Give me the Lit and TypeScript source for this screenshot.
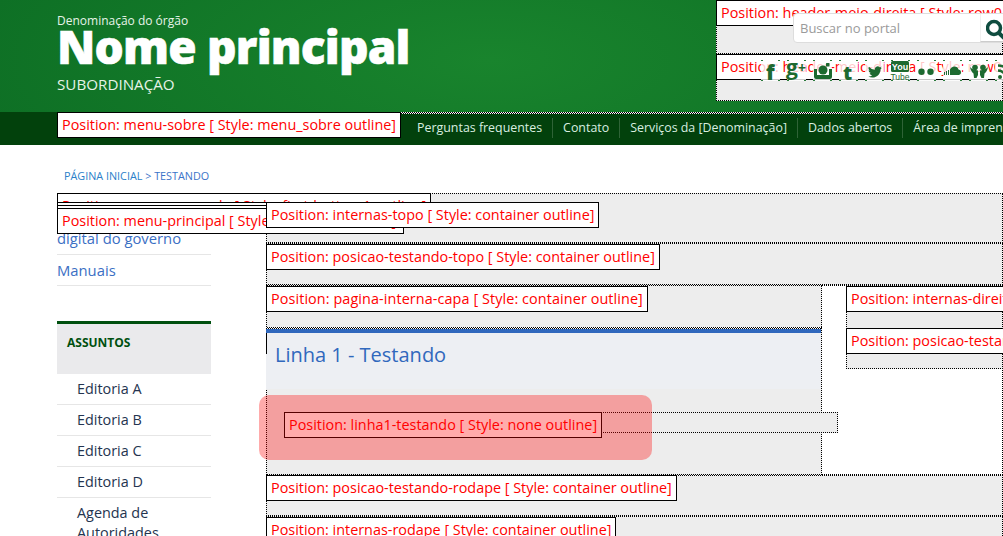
import { LitElement, css, html, svg } from 'lit';
import { customElement } from 'lit/decorators.js';

const NAV_ITEMS = ['Perguntas frequentes', 'Contato', 'Serviços da [Denominação]', 'Dados abertos', 'Área de imprensa'];
const ASSUNTOS = ['Editoria A', 'Editoria B', 'Editoria C', 'Editoria D', 'Agenda de Autoridades'];

const txt = (x: number, y: number, size: number, s: string, weight = 800) =>
  svg`<text x=${x} y=${y} font-size=${size} font-family="Open Sans" font-weight=${weight} fill="currentColor">${s}</text>`;

// sprite of social icons, drawn on a 19x21 tile
const SOCIAL = [
  txt(5, 20, 21, 'f'),
  svg`${txt(-1, 15, 21, 'g', 700)}${txt(11, 13, 14, '+', 700)}`,
  svg`<path d="M1 9h3v6h12V9h3v8a2 2 0 0 1-2 2H3a2 2 0 0 1-2-2z"/>
    <circle cx="10" cy="10" r="4.500"/>
    <rect x="13" y="3" width="3.500" height="3.500" rx="0.500"/>`,
  txt(4, 20, 20, 't'),
  svg`<path transform="translate(3 5) scale(0.58)" d="M23.95 4.57a10 10 0 0 1-2.82.78 4.96 4.96 0 0 0 2.16-2.72 10 10 0 0 1-3.12 1.18 4.92 4.92 0 0 0-8.38 4.48A13.94 13.94 0 0 1 1.64 3.16a4.92 4.92 0 0 0 1.52 6.57 4.9 4.9 0 0 1-2.23-.62v.06a4.92 4.92 0 0 0 3.95 4.83 5 5 0 0 1-2.21.08 4.94 4.94 0 0 0 4.6 3.42A9.87 9.87 0 0 1 0 19.54a14 14 0 0 0 7.56 2.21c9.05 0 14-7.5 14-13.98 0-.21 0-.42-.02-.63a10 10 0 0 0 2.41-2.57z"/>`,
  svg`<rect x="0" y="1" width="18" height="11" rx="1.500"/>
    <text x="9" y="10" text-anchor="middle" font-size="9" font-weight="700" font-family="Liberation Sans" fill="#fff">You</text>
    <text x="9" y="20" text-anchor="middle" font-size="8.500" font-family="Liberation Sans" fill="currentColor">Tube</text>`,
  svg`<circle cx="4.500" cy="11.700" r="3.200"/><circle cx="13.500" cy="11.700" r="3.200"/>`,
  svg`<path d="M1 15v-3h1v3zM3 15v-4h1v4zM5 15v-5h1v5zM7 15V9.500a5 5 0 0 1 7-2.300 4 4 0 0 1 1.500 2.300A2.800 2.800 0 0 1 16 15z"/>`,
  svg`<circle cx="6" cy="7.500" r="2.800"/><circle cx="14" cy="7.500" r="2.800"/>
    <path d="M1 7c2 2.500 5 3 8 3.500V15l-1.500 3H5l-.5-4.500C3 12.500 1.500 10 1 7zM19 7c-2 2.500-5 3-8 3.500V15l1.500 3H15l.5-4.500C17 12.500 18.500 10 19 7z"/>`,
  svg`<circle cx="5" cy="17" r="2"/>
    <path d="M3 10.500a8 8 0 0 1 8 8M3 5.500a13 13 0 0 1 13 13" fill="none" stroke="currentColor" stroke-width="2.500"/>`,
];

@customElement('app-root')
export class AppRoot extends LitElement {
  static styles = css`
    :host {
      display: block;
      width: 100%;
      height: 536px;
      overflow: hidden;
      background: #fff;
      font-family: 'Open Sans', 'Liberation Sans', sans-serif;
    }

    /* template preview boxes */
    .label {
      position: relative;
      z-index: 2;
      display: block;
      box-sizing: border-box;
      width: max-content;
      height: 26px;
      padding: 2px 4px;
      border: 1px solid #000;
      background: #fff;
      color: #f00;
      font-size: 14.4px;
      line-height: 20px;
      white-space: nowrap;
    }

    .label.spread {
      letter-spacing: 0.09px;
    }

    .mod {
      box-sizing: border-box;
      background: #ededed;
      outline: 1px dotted #000;
      outline-offset: -1px;
    }

    .header {
      display: flex;
      justify-content: space-between;
      height: 112px;
      padding-left: 57px;
      background: radial-gradient(ellipse 520px 190px at 490px 60px, #19842d 0%, #0e7025 100%);
    }

    .brand {
      display: flex;
      flex-direction: column;
      color: #fff;
    }

    .organ {
      margin-top: 11px;
      font-size: 12px;
      line-height: 20px;
      color: #e6f3e8;
    }

    .title {
      margin-top: -9px;
      font-size: 46px;
      font-weight: 800;
      line-height: 48px;
      letter-spacing: -0.8px;
      -webkit-text-stroke: 0.6px #fff;
      white-space: nowrap;
    }

    .sub {
      margin-top: 4px;
      font-size: 15.2px;
      line-height: 20px;
      color: #e6f3e8;
    }

    .tools {
      position: relative;
      width: 287px;
      height: 101px;
      overflow: hidden;
    }

    .tools .first {
      height: 54px;
    }

    .tools .second {
      height: 47px;
    }

    .search {
      position: absolute;
      z-index: 3;
      top: 13px;
      left: 77px;
      display: flex;
      box-sizing: border-box;
      width: 230px;
      height: 30px;
      border: 1px solid #ddd;
      border-radius: 4px;
      background: #fff;
    }

    .search span {
      flex: 1;
      padding-left: 6px;
      color: #9a9a9a;
      font-size: 13px;
      line-height: 28px;
    }

    .search button {
      width: 42px;
      padding: 0;
      border: 0;
      border-left: 1px solid #f0f0f0;
      border-bottom: 1px solid #ccc;
      background: #fff;
      text-align: left;
    }

    .search svg {
      display: block;
      margin-left: 5px;
    }

    .social {
      position: absolute;
      z-index: 3;
      top: 60px;
      left: 45px;
      display: flex;
      gap: 7px;
      color: #1d6a30;
    }

    .tile {
      width: 19px;
      height: 21px;
      background:
        linear-gradient(#2b7a3c, #2b7a3c) left top / 2px 1px no-repeat,
        linear-gradient(#2b7a3c, #2b7a3c) right top / 2px 1px no-repeat,
        linear-gradient(#2b7a3c, #2b7a3c) left bottom / 2px 1px no-repeat,
        linear-gradient(#2b7a3c, #2b7a3c) right bottom / 2px 1px no-repeat,
        rgba(255, 255, 255, 0.78);
    }

    .tile svg {
      display: block;
      overflow: visible;
      fill: currentColor;
    }

    .nav {
      display: flex;
      height: 33px;
      padding-left: 57px;
      background: #02410c;
    }

    .nav-line {
      display: flex;
      flex: 1;
      padding-left: 6px;
      background: conic-gradient(#000 25%, #fff 0 50%, #000 0 75%, #fff 0) left top / 2px 2px repeat-x;
    }

    .nav a {
      height: 20px;
      margin-top: 6px;
      padding: 0 10px;
      border-right: 1px solid rgba(255, 255, 255, 0.18);
      color: #d9efe0;
      font-size: 12.4px;
      line-height: 20px;
      white-space: nowrap;
    }

    .nav a:last-child {
      border-right: 0;
    }

    .crumb {
      padding: 21px 0 7px 64px;
      color: #3b73c8;
      font-size: 10.8px;
      line-height: 20px;
    }

    .crumb b {
      color: #2b7fc9;
      font-weight: 400;
    }

    .main {
      display: flex;
      padding-left: 57px;
    }

    .side {
      flex: none;
      width: 154px;
      margin-right: 55px;
    }

    .side .label {
      z-index: 1;
    }

    .side .label + .label {
      margin-top: -23px;
    }

    .side .label.l2 {
      margin-top: -17px;
    }

    .side .label.front {
      padding-right: 7px;
    }

    .links {
      margin: -31px 0 0;
      padding: 0;
      list-style: none;
      font-size: 14.8px;
      line-height: 20px;
      color: #3b6fc4;
    }

    .links li {
      padding: 5px 0;
      border-bottom: 1px solid #e6e6e6;
    }

    .links li:first-child {
      padding-bottom: 6px;
    }

    .topics {
      margin-top: 35px;
    }

    .topics h2 {
      box-sizing: border-box;
      height: 53px;
      margin: 0;
      padding: 9px 10px;
      border-top: 3px solid #00500f;
      background: #eaeaec;
      color: #00500f;
      font-size: 12px;
      font-weight: 700;
      line-height: 20px;
    }

    .topics ul {
      margin: 0;
      padding: 0;
      list-style: none;
    }

    .topics li {
      padding: 5px 20px;
      border-bottom: 1px solid #e6e6e6;
      color: #24344f;
      font-size: 14.4px;
      line-height: 20px;
    }

    .content {
      flex: 1;
      min-width: 0;
    }

    .m-topo {
      height: 50px;
      padding-top: 9px;
    }

    .m-testando {
      height: 42px;
      padding-top: 1px;
    }

    .cols {
      display: flex;
      gap: 24px;
      height: 190px;
      outline: 1px dotted #000;
      outline-offset: -1px;
    }

    .capa {
      position: relative;
      flex: none;
      width: 556px;
      padding-top: 1px;
    }

    .capa-head {
      height: 43px;
      background: conic-gradient(#000 25%, #fff 0 50%, #000 0 75%, #fff 0) left bottom / 2px 2px repeat-x;
    }

    .line {
      position: relative;
      z-index: 1;
      box-sizing: border-box;
      height: 60px;
      margin: 0 1px 0 0;
      padding: 7px 9px 0;
      border-top: 4px solid #3068bd;
      background: linear-gradient(#000, #000) left top / 1px 21px no-repeat, #edeff3;
      color: #3068bd;
      font-size: 20px;
      font-weight: 400;
      line-height: 30px;
    }

    .slot {
      position: relative;
      z-index: 2;
      width: 554px;
      height: 21px;
      margin: 23px 0 0 18px;
      background: #ededed;
      outline: 1px dotted #000;
      outline-offset: -1px;
    }

    .highlight {
      position: absolute;
      z-index: 4;
      top: -17px;
      left: -25px;
      width: 393px;
      height: 65px;
      border-radius: 10px;
      background: rgba(255, 0, 0, 0.33);
    }

    .aside {
      flex: 1;
      min-width: 0;
      overflow: hidden;
      align-self: flex-start;
      height: 84px;
      padding-top: 1px;
    }

    .aside .gap {
      height: 16px;
    }

    .m-rodape {
      height: 41px;
    }

    .m-last {
      height: 60px;
      padding-top: 1px;
    }
  `;

  private label(text: string, cls = '') {
    return html`<span class="label ${cls}">${text}</span>`;
  }

  render() {
    return html`
      <header class="header">
        <div class="brand">
          <span class="organ">Denominação do órgão</span>
          <span class="title">Nome principal</span>
          <span class="sub">SUBORDINAÇÃO</span>
        </div>
        <div class="tools">
          <div class="mod first">${this.label('Position: header-meio-direita [ Style: row0 outline]')}</div>
          <div class="mod second">${this.label('Position: header-meio-direita [ Style: row0 outline]')}</div>
          <div class="search">
            <span>Buscar no portal</span>
            <button aria-label="Buscar">
              <svg width="24" height="24" viewBox="0 0 24 24">
                <circle cx="8" cy="12" r="6.500" fill="none" stroke="#0f4c3f" stroke-width="3.500"/>
                <path d="M13 17l6 6" stroke="#0f4c3f" stroke-width="4"/>
              </svg>
            </button>
          </div>
          <div class="social">
            ${SOCIAL.map(
              (icon) => html`<div class="tile"><svg width="19" height="21" viewBox="0 0 19 21">${icon}</svg></div>`
            )}
          </div>
        </div>
      </header>

      <nav class="nav">
        ${this.label('Position: menu-sobre [ Style: menu_sobre outline]')}
        <div class="nav-line">${NAV_ITEMS.map((item) => html`<a>${item}</a>`)}</div>
      </nav>

      <div class="crumb"><b>PÁGINA INICIAL</b> &gt; TESTANDO</div>

      <div class="main">
        <aside class="side">
          ${this.label('Position: menu-esquerda [ Style: first-bottom1 outline]')}
          ${this.label('Position: menu-principal [ Style: container outline]', 'l2')}
          ${this.label('Position: menu-principal [ Style: container outline]')}
          ${this.label('Position: menu-principal [ Style: container outline]', 'front')}
          <ul class="links">
            <li>Identidade<br />digital do governo</li>
            <li>Manuais</li>
          </ul>
          <section class="topics">
            <h2>ASSUNTOS</h2>
            <ul>
              ${ASSUNTOS.map((item) => html`<li>${item}</li>`)}
            </ul>
          </section>
        </aside>

        <main class="content">
          <div class="mod m-topo">${this.label('Position: internas-topo [ Style: container outline]')}</div>
          <div class="mod m-testando">${this.label('Position: posicao-testando-topo [ Style: container outline]')}</div>
          <div class="cols">
            <div class="mod capa">
              <div class="capa-head">
                ${this.label('Position: pagina-interna-capa [ Style: container outline]', 'spread')}
              </div>
              <h1 class="line">Linha 1 - Testando</h1>
              <div class="slot">
                ${this.label('Position: linha1-testando [ Style: none outline]')}
                <div class="highlight"></div>
              </div>
            </div>
            <div class="mod aside">
              ${this.label('Position: internas-direita [ Style: container outline]')}
              <div class="gap"></div>
              ${this.label('Position: posicao-testando-direita [ Style: container outline]')}
            </div>
          </div>
          <div class="mod m-rodape">${this.label('Position: posicao-testando-rodape [ Style: container outline]')}</div>
          <div class="mod m-last">${this.label('Position: internas-rodape [ Style: container outline]')}</div>
        </main>
      </div>
    `;
  }
}
